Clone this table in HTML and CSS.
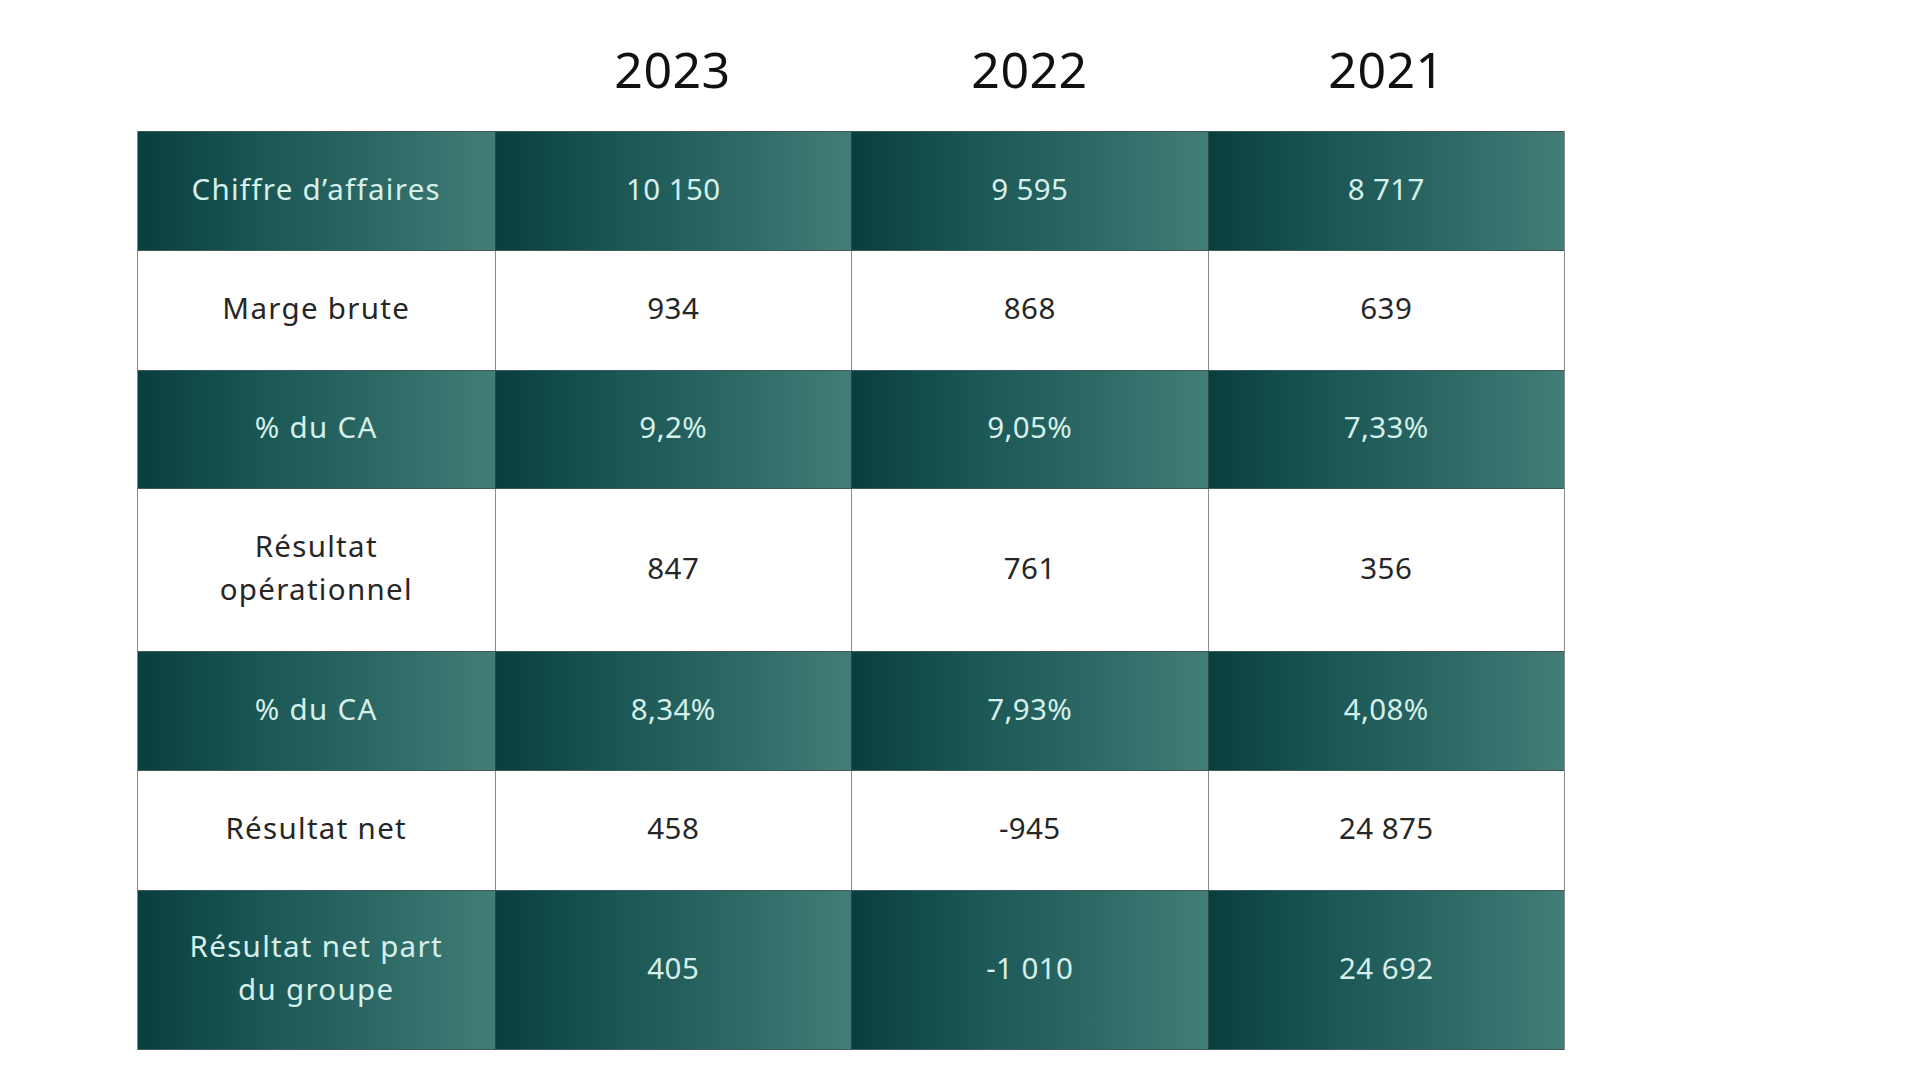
FILE: index.html
```html
<!DOCTYPE html>
<html lang="fr">
<head>
<meta charset="utf-8">
<title>Résultats</title>
<link rel="stylesheet" href="styles.css">
</head>
<body>
<div class="page">
  <div class="years">
    <div class="year"></div>
    <div class="year">2023</div>
    <div class="year">2022</div>
    <div class="year">2021</div>
  </div>
  <div class="table">
    <div class="row dark h120"><div class="cell">Chiffre d’affaires</div><div class="cell num">10 150</div><div class="cell num">9 595</div><div class="cell num">8 717</div></div>
    <div class="row light h119"><div class="cell">Marge brute</div><div class="cell num">934</div><div class="cell num">868</div><div class="cell num">639</div></div>
    <div class="row dark h119"><div class="cell">% du CA</div><div class="cell num">9,2%</div><div class="cell num">9,05%</div><div class="cell num">7,33%</div></div>
    <div class="row light h162"><div class="cell">Résultat<br>opérationnel</div><div class="cell num">847</div><div class="cell num">761</div><div class="cell num">356</div></div>
    <div class="row dark h120"><div class="cell">% du CA</div><div class="cell num">8,34%</div><div class="cell num">7,93%</div><div class="cell num">4,08%</div></div>
    <div class="row light h119"><div class="cell">Résultat net</div><div class="cell num">458</div><div class="cell num">-945</div><div class="cell num">24 875</div></div>
    <div class="row dark h160"><div class="cell">Résultat net part<br>du groupe</div><div class="cell num">405</div><div class="cell num">-1 010</div><div class="cell num">24 692</div></div>
  </div>
</div>
</body>
</html>
```
FILE: styles.css
```css
html, body {
  margin: 0;
  padding: 0;
  background: #ffffff;
}
body {
  font-family: "Noto Sans", "Open Sans", sans-serif;
  width: 1926px;
  height: 1083px;
  overflow: hidden;
}
.page {
  padding-left: 137px;
  width: 1428px;
}
.years {
  display: grid;
  grid-template-columns: repeat(4, 357px);
  height: 131px;
  align-items: center;
}
.year {
  text-align: center;
  font-size: 50px;
  font-weight: 400;
  color: #111;
  letter-spacing: 0.5px;
  padding-top: 6px;
}
.table {
  display: flex;
  flex-direction: column;
  border-left: 1px solid #8a8a8a;
  border-right: 1px solid #8a8a8a;
}
.row {
  display: grid;
  grid-template-columns: repeat(4, 1fr);
  box-sizing: border-box;
}
.h119 { height: 119px; }
.h120 { height: 120px; }
.h160 { height: 160px; }
.h162 { height: 162px; }
.cell {
  display: flex;
  align-items: center;
  justify-content: center;
  text-align: center;
  font-size: 29.5px;
  font-weight: 400;
  line-height: 43px;
  letter-spacing: 1.3px;
  padding-bottom: 6px;
  box-sizing: border-box;
}
.cell.num {
  letter-spacing: 0.4px;
}
.dark {
  border-top: 1px solid #3f5957;
  border-bottom: 1px solid #3f5957;
}
.dark .cell {
  color: #d6efea;
  background: linear-gradient(90deg, #093f3e 0%, #1a5755 35%, #2e6b67 70%, #437d78 100%);
  border-left: 1px solid #2a4846;
}
.dark .cell:first-child { border-left: none; }
.light .cell {
  color: #262626;
  background: #fff;
  border-left: 1px solid #8a8a8a;
}
.light .cell:first-child { border-left: none; }
```
